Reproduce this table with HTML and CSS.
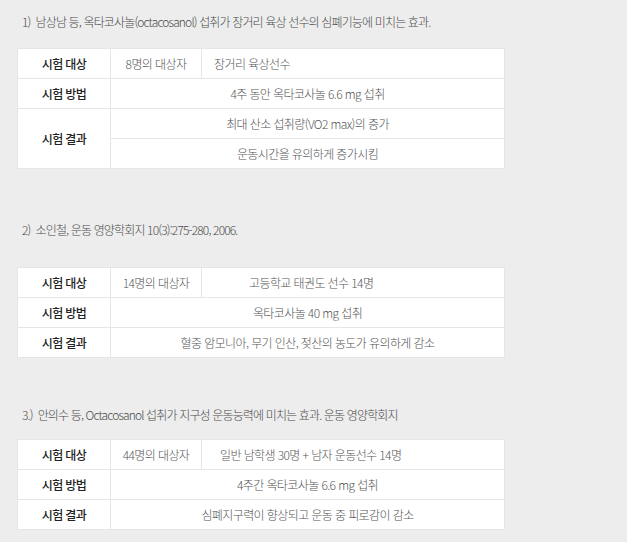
FILE: index.html
```html
<!DOCTYPE html>
<html lang="ko">
<head>
<meta charset="utf-8">
<link rel="stylesheet" href="styles.css">
</head>
<body>
<div class="page">
  <p class="ref ref-1">1)&nbsp; 남상남 등, 옥타코사놀(octacosanol) 섭취가 장거리 육상 선수의 심폐기능에 미치는 효과.</p>
  <table class="study">
    <colgroup><col class="c1"><col class="c2"><col class="c3"></colgroup>
    <tr><th>시험 대상</th><td class="mid">8명의 대상자</td><td class="left pad-a">장거리 육상선수</td></tr>
    <tr><th>시험 방법</th><td colspan="2">4주 동안 옥타코사놀 6.6 mg 섭취</td></tr>
    <tr><th rowspan="2">시험 결과</th><td colspan="2">최대 산소 섭취량(VO2 max)의 증가</td></tr>
    <tr><td colspan="2">운동시간을 유의하게 증가시킴</td></tr>
  </table>

  <p class="ref ref-2">2)&nbsp; 소인철, 운동 영양학회지 10(3):275-280, 2006.</p>
  <table class="study">
    <colgroup><col class="c1"><col class="c2"><col class="c3"></colgroup>
    <tr><th>시험 대상</th><td class="mid">14명의 대상자</td><td class="left pad-b">고등학교 태권도 선수 14명</td></tr>
    <tr><th>시험 방법</th><td colspan="2">옥타코사놀 40 mg 섭취</td></tr>
    <tr><th>시험 결과</th><td colspan="2">혈중 암모니아, 무기 인산, 젖산의 농도가 유의하게 감소</td></tr>
  </table>

  <p class="ref ref-3">3.)&nbsp; 안의수 등, Octacosanol 섭취가 지구성 운동능력에 미치는 효과. 운동 영양학회지</p>
  <table class="study">
    <colgroup><col class="c1"><col class="c2"><col class="c3"></colgroup>
    <tr><th>시험 대상</th><td class="mid">44명의 대상자</td><td class="left pad-c">일반 남학생 30명 + 남자 운동선수 14명</td></tr>
    <tr><th>시험 방법</th><td colspan="2">4주간 옥타코사놀 6.6 mg 섭취</td></tr>
    <tr><th>시험 결과</th><td colspan="2">심폐지구력이 향상되고 운동 중 피로감이 감소</td></tr>
  </table>
</div>
</body>
</html>
```
FILE: styles.css
```css
html, body {
  margin: 0;
  padding: 0;
  background: #ededed;
}
body {
  font-family: "Noto Sans CJK KR", "Noto Sans", sans-serif;
  color: #555;
}
.page {
  padding: 0 0 0 17px;
  width: 487px;
}
.ref {
  margin: 0;
  padding-left: 5px;
  font-size: 12px;
  line-height: 20px;
  font-weight: 300;
  letter-spacing: -0.85px;
  color: #4a4a4a;
  white-space: nowrap;
}
.ref-1 { margin-top: 12px; margin-bottom: 16px; }
.ref-2 { margin-top: 51px; margin-bottom: 27px; }
.ref-3 { margin-top: 47px; margin-bottom: 14px; }
.study {
  width: 487px;
  table-layout: fixed;
  border-collapse: collapse;
  background: #fff;
}
.c1 { width: 93px; }
.c2 { width: 91px; }
.c3 { width: 303px; }
.study th, .study td {
  border: 1px solid #e6e6e6;
  height: 29px;
  padding: 0;
  font-size: 12px;
  line-height: 16px;
  letter-spacing: -0.6px;
  text-align: center;
  vertical-align: middle;
  white-space: nowrap;
}
.study th {
  font-weight: 500;
  color: #222;
}
.study td {
  font-weight: 300;
  color: #555;
}
.study td.left { text-align: left; }
.study td.pad-a { padding-left: 12px; }
.study td.pad-b { padding-left: 47px; }
.study td.pad-c { padding-left: 18px; }
```
